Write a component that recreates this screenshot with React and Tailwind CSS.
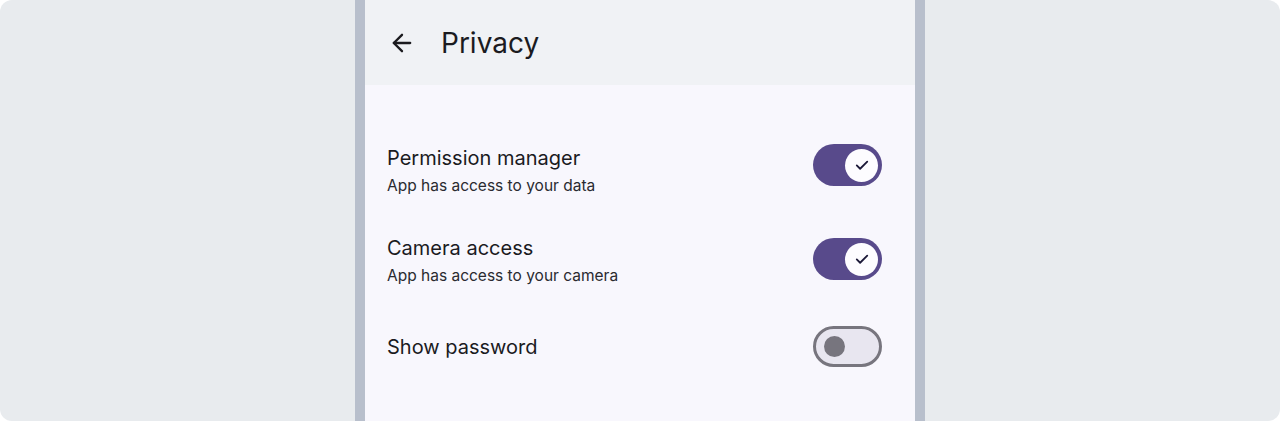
import { ArrowLeft } from 'lucide-react';

function Toggle({ on }) {
  if (on) {
    return (
      <div className="w-[69px] h-[42px] shrink-0 rounded-full bg-[#584a8b] flex items-center justify-end pr-[4px]">
        <div className="w-[33px] h-[33px] rounded-full bg-[#fdfcff] flex items-center justify-center">
          <svg width="18" height="18" viewBox="0 0 24 24" fill="none" stroke="#1b1838" strokeWidth="2.4" strokeLinecap="round" strokeLinejoin="round">
            <path d="M5 12.5l4.5 4.5L19 7.5" />
          </svg>
        </div>
      </div>
    );
  }
  return (
    <div className="w-[69px] h-[41px] shrink-0 rounded-full bg-[#e8e6f0] border-[3px] border-[#77757e] flex items-center pl-[8px]">
      <div className="w-[21px] h-[21px] rounded-full bg-[#77757e]" />
    </div>
  );
}

const rows = [
  { title: 'Permission manager', sub: 'App has access to your data', on: true, h: 'h-[94px]', shift: '' },
  { title: 'Camera access', sub: 'App has access to your camera', on: true, h: 'h-[88px]', shift: '-mt-[4px]' },
  { title: 'Show password', sub: null, on: false, h: 'h-[41px]', shift: '' },
];

export default function App() {
  return (
    <div className="w-full h-[421px] bg-[#e8ebee] rounded-xl overflow-hidden flex justify-center" style={{ fontFamily: 'Inter, sans-serif' }}>
      <div className="w-[570px] h-full border-x-[10px] border-[#b8bfcc] flex flex-col">
        {/* Top bar */}
        <div className="h-[85px] shrink-0 bg-[#f0f2f5] flex items-center pl-[23px] gap-[25px]">
          <ArrowLeft className="w-[28px] h-[28px] text-[#1b1b1f]" strokeWidth={2} />
          <span className="text-[28px] text-[#1b1b1f]">Privacy</span>
        </div>

        {/* Settings */}
        <div className="flex-1 bg-[#f8f7fd] pt-[59px] pl-[22px] pr-[33px]">
          {rows.map((r) => (
            <div key={r.title} className={`flex justify-between ${r.sub ? 'items-start' : 'items-center'} ${r.h}`}>
              <div className={`flex flex-col ${r.shift}`}>
                <span className="text-[20px] leading-[28px] text-[#1b1b1f]">{r.title}</span>
                {r.sub && <span className="mt-[3px] text-[15.5px] leading-[22px] text-[#2a2a30]">{r.sub}</span>}
              </div>
              <Toggle on={r.on} />
            </div>
          ))}
        </div>
      </div>
    </div>
  );
}
